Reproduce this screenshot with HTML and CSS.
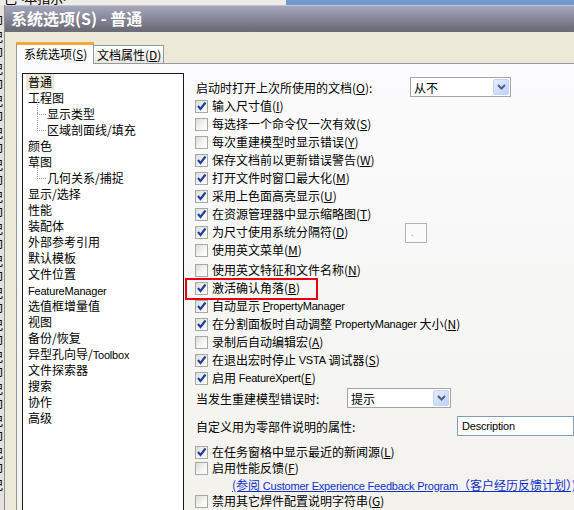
FILE: index.html
```html
<!DOCTYPE html>
<html lang="zh-CN">
<head>
    <meta charset="UTF-8">
    <title>系统选项 - 普通</title>
    <link rel="stylesheet" href="styles.css">
</head>
<body>
    <div class="desk">
        <div class="desk-top">
            <span class="desk-top-text">己&lt;本指示&gt;</span>
            <div class="desk-top-blue"></div>
        </div>
        <div class="desk-side">
            <span>印<br>记<br>印<br>记<br>印<br>记<br>印<br>记<br>印<br>记<br>印<br>记<br>印<br>记<br>印<br>记<br>印<br>记<br>印<br>记<br>印<br>记<br>印<br>记<br>印<br>记<br>印<br>记<br>印<br>记</span>
        </div>

        <div class="dialog">
            <div class="titlebar">系统选项(S) - 普通</div>

            <div class="dialog-body">
                <div class="tabs">
                    <div class="tab tab-active">系统选项(<u>S</u>)</div>
                    <div class="tab">文档属性(<u>D</u>)</div>
                </div>

                <div class="tab-page">
                    <!-- category tree -->
                    <ul class="tree">
                        <li><span class="selected">普通</span></li>
                        <li><span>工程图</span></li>
                        <li class="sub"><span>显示类型</span></li>
                        <li class="sub"><span>区域剖面线/填充</span></li>
                        <li><span>颜色</span></li>
                        <li><span>草图</span></li>
                        <li class="sub"><span>几何关系/捕捉</span></li>
                        <li><span>显示/选择</span></li>
                        <li><span>性能</span></li>
                        <li><span>装配体</span></li>
                        <li><span>外部参考引用</span></li>
                        <li><span>默认模板</span></li>
                        <li><span>文件位置</span></li>
                        <li><span class="en">FeatureManager</span></li>
                        <li><span>选值框增量值</span></li>
                        <li><span>视图</span></li>
                        <li><span>备份/恢复</span></li>
                        <li><span>异型孔向导/<span class="en">Toolbox</span></span></li>
                        <li><span>文件探索器</span></li>
                        <li><span>搜索</span></li>
                        <li><span>协作</span></li>
                        <li><span>高级</span></li>
                    </ul>

                    <!-- general options -->
                    <div class="options">
                        <div class="field-row">
                            <span class="field-label label-open">启动时打开上次所使用的文档(<u>O</u>):</span>
                            <div class="select select-open"><span>从不</span><span class="select-btn"><svg width="9" height="6" viewBox="0 0 9 6"><path d="M1 1 L4.5 4.5 L8 1" fill="none" stroke="#4d6185" stroke-width="2"/></svg></span></div>
                        </div>

                        <div class="check-row"><span class="box checked"><svg width="11" height="11" viewBox="0 0 11 11"><path d="M2 5 L4.5 8 L9.5 1.5" fill="none" stroke="#22409c" stroke-width="2.2"/></svg></span>输入尺寸值(<u>I</u>)</div>
                        <div class="check-row"><span class="box"></span>每选择一个命令仅一次有效(<u>S</u>)</div>
                        <div class="check-row"><span class="box"></span>每次重建模型时显示错误(<u>Y</u>)</div>
                        <div class="check-row"><span class="box checked"><svg width="11" height="11" viewBox="0 0 11 11"><path d="M2 5 L4.5 8 L9.5 1.5" fill="none" stroke="#22409c" stroke-width="2.2"/></svg></span>保存文档前以更新错误警告(<u>W</u>)</div>
                        <div class="check-row"><span class="box checked"><svg width="11" height="11" viewBox="0 0 11 11"><path d="M2 5 L4.5 8 L9.5 1.5" fill="none" stroke="#22409c" stroke-width="2.2"/></svg></span>打开文件时窗口最大化(<u>M</u>)</div>
                        <div class="check-row"><span class="box checked"><svg width="11" height="11" viewBox="0 0 11 11"><path d="M2 5 L4.5 8 L9.5 1.5" fill="none" stroke="#22409c" stroke-width="2.2"/></svg></span>采用上色面高亮显示(<u>U</u>)</div>
                        <div class="check-row"><span class="box checked"><svg width="11" height="11" viewBox="0 0 11 11"><path d="M2 5 L4.5 8 L9.5 1.5" fill="none" stroke="#22409c" stroke-width="2.2"/></svg></span>在资源管理器中显示缩略图(<u>T</u>)</div>
                        <div class="check-row">
                            <span class="check-wide"><span class="box checked"><svg width="11" height="11" viewBox="0 0 11 11"><path d="M2 5 L4.5 8 L9.5 1.5" fill="none" stroke="#22409c" stroke-width="2.2"/></svg></span>为尺寸使用系统分隔符(<u>D</u>)</span>
                            <span class="mini-field">.</span>
                        </div>
                        <div class="check-row"><span class="box"></span>使用英文菜单(<u>M</u>)</div>
                        <div class="check-row spaced"><span class="box"></span>使用英文特征和文件名称(<u>N</u>)</div>
                        <div class="check-row marked"><span class="box checked"><svg width="11" height="11" viewBox="0 0 11 11"><path d="M2 5 L4.5 8 L9.5 1.5" fill="none" stroke="#22409c" stroke-width="2.2"/></svg></span>激活确认角落(<u>B</u>)</div>
                        <div class="check-row"><span class="box checked"><svg width="11" height="11" viewBox="0 0 11 11"><path d="M2 5 L4.5 8 L9.5 1.5" fill="none" stroke="#22409c" stroke-width="2.2"/></svg></span>自动显示&nbsp;<span class="en"><u>P</u>ropertyManager</span></div>
                        <div class="check-row"><span class="box checked"><svg width="11" height="11" viewBox="0 0 11 11"><path d="M2 5 L4.5 8 L9.5 1.5" fill="none" stroke="#22409c" stroke-width="2.2"/></svg></span>在分割面板时自动调整&nbsp;<span class="en">PropertyManager</span>&nbsp;大小(<u>N</u>)</div>
                        <div class="check-row"><span class="box"></span>录制后自动编辑宏(<u>A</u>)</div>
                        <div class="check-row"><span class="box checked"><svg width="11" height="11" viewBox="0 0 11 11"><path d="M2 5 L4.5 8 L9.5 1.5" fill="none" stroke="#22409c" stroke-width="2.2"/></svg></span>在退出宏时停止&nbsp;<span class="en">VSTA</span>&nbsp;调试器(<u>S</u>)</div>
                        <div class="check-row"><span class="box checked"><svg width="11" height="11" viewBox="0 0 11 11"><path d="M2 5 L4.5 8 L9.5 1.5" fill="none" stroke="#22409c" stroke-width="2.2"/></svg></span>启用&nbsp;<span class="en">FeatureXpert</span>(<u>E</u>)</div>

                        <div class="field-row rebuild-row">
                            <span class="field-label label-rebuild">当发生重建模型错误时:</span>
                            <div class="select select-rebuild"><span>提示</span><span class="select-btn"><svg width="9" height="6" viewBox="0 0 9 6"><path d="M1 1 L4.5 4.5 L8 1" fill="none" stroke="#4d6185" stroke-width="2"/></svg></span></div>
                        </div>

                        <div class="field-row property-row">
                            <span class="field-label label-property">自定义用为零部件说明的属性:</span>
                            <div class="text-input en">Description</div>
                        </div>

                        <div class="check-row tight news-row"><span class="box checked"><svg width="11" height="11" viewBox="0 0 11 11"><path d="M2 5 L4.5 8 L9.5 1.5" fill="none" stroke="#22409c" stroke-width="2.2"/></svg></span>在任务窗格中显示最近的新闻源(<u>L</u>)</div>
                        <div class="check-row tight"><span class="box"></span>启用性能反馈(<u>F</u>)</div>
                        <div class="link-row"><a class="link" href="#">(参阅 <span class="en">Customer Experience Feedback Program</span>（客户经历反馈计划）)</a></div>
                        <div class="check-row last"><span class="box"></span>禁用其它焊件配置说明字符串(<u>G</u>)</div>
                    </div>
                </div>
            </div>
        </div>
    </div>
</body>
</html>
```

FILE: styles.css
```css
* {
    margin: 0;
    padding: 0;
    box-sizing: border-box;
}

body {
    font-family: "Noto Sans CJK SC", sans-serif;
    font-size: 12px;
    color: #000;
    background: #d6d3ce;
}

u {
    text-decoration: underline;
    text-underline-offset: 1px;
}

/* latin runs use an Arial-width face, closer to the dialog font */
.en {
    font-family: "Liberation Sans", Arial, sans-serif;
    font-size: 11px;
    letter-spacing: -0.2px;
}

.desk {
    width: 574px;
    height: 510px;
    overflow: hidden;
    display: grid;
    grid-template-columns: 5px 569px;
    grid-template-rows: 5px 505px;
}

/* window behind the dialog */
.desk-top {
    grid-column: 1 / -1;
    display: flex;
    background: #eeede8;
    overflow: hidden;
}

.desk-top-text {
    width: 286px;
    line-height: 12px;
    margin-top: -8px;
    padding-left: 4px;
    font-size: 13px;
}

.desk-top-blue {
    flex: 1;
    background: #7199d0;
}

.desk-side {
    background: #e4e2dc;
    overflow: hidden;
    border-right: 1px solid #8d8d96;
}

.desk-side span {
    display: block;
    margin-left: -9px;
    padding-top: 8px;
    font-size: 12px;
    line-height: 16px;
}

/* dialog */
.dialog {
    display: flex;
    flex-direction: column;
    min-width: 0;
}

.titlebar {
    height: 27px;
    padding-left: 6px;
    color: #fff;
    font-size: 16px;
    font-weight: bold;
    line-height: 25px;
    border-top: 1px solid #c4c5d0;
    background: linear-gradient(#a5a7bb, #8f90a4 35%, #6e6f7b 85%, #6a6b77);
}

.dialog-body {
    flex: 1;
    display: flex;
    flex-direction: column;
    background: #ece9d8;
    padding: 10px 0 0 11px;
    min-height: 0;
}

.tabs {
    display: flex;
    align-items: flex-end;
    height: 21px;
    position: relative;
    z-index: 1;
}

.tab {
    height: 18px;
    width: 70px;
    padding-left: 3px;
    line-height: 17px;
    white-space: nowrap;
    border: 1px solid #919b9c;
    border-left: none;
    border-bottom: none;
    background: linear-gradient(#ffffff, #f3f2ed 60%, #e5e4dd);
}

.tab-active {
    height: 22px;
    width: 78px;
    margin-bottom: -1px;
    padding-left: 7px;
    line-height: 18px;
    border-left: 1px solid #919b9c;
    border-top: 3px solid #f4a93b;
    background: #fcfcfe;
}

.tab-page {
    flex: 1;
    display: flex;
    min-height: 0;
    padding: 9px 0 0 5px;
    border-top: 1px solid #919b9c;
    border-left: 1px solid #919b9c;
    background: linear-gradient(#fcfcfe, #f7f7f6 50%, #f3f2ed);
    white-space: nowrap;
}

/* tree */
.tree {
    list-style: none;
    width: 162px;
    flex-shrink: 0;
    margin-bottom: -4px;
    background: #fff;
    border: 1px solid #1a1a1a;
}

.tree li {
    position: relative;
    height: 16px;
    line-height: 16px;
    padding-left: 3px;
}

.tree li > span {
    padding: 0 2px;
}

.tree li .selected {
    display: inline-block;
    height: 16px;
    background: #ece9d8;
}

.tree li.sub {
    padding-left: 22px;
}

/* dotted branch lines for child items */
.tree li.sub::before {
    content: "";
    position: absolute;
    left: 14px;
    top: -7px;
    width: 8px;
    height: 15px;
    border-left: 1px dotted #9a9a9a;
    border-bottom: 1px dotted #9a9a9a;
}

.tree li.sub + li.sub::before {
    top: -9px;
    height: 17px;
}

/* options panel */
.options {
    flex: 1;
    min-width: 0;
    padding: 4px 0 0 11px;
    display: flex;
    flex-direction: column;
}

.field-row {
    display: flex;
    align-items: center;
    height: 20px;
}

.field-label {
    flex-shrink: 0;
    padding-left: 1px;
}

.label-open {
    width: 215px;
}

.label-rebuild {
    width: 152px;
}

.label-property {
    width: 262px;
}

.select {
    display: flex;
    align-items: center;
    justify-content: space-between;
    height: 20px;
    padding: 0 1px 0 3px;
    background: #fff;
    border: 1px solid #a5a5a5;
}

.select-open {
    width: 101px;
}

.select-rebuild {
    width: 104px;
}

.select-btn {
    display: flex;
    align-items: center;
    justify-content: center;
    width: 16px;
    height: 16px;
    border: 1px solid #c3d3fd;
    border-radius: 2px;
    background: linear-gradient(135deg, #e6eefe, #bfd1fa);
}

.text-input {
    flex: 1;
    height: 20px;
    padding-left: 4px;
    line-height: 18px;
    background: #fff;
    border: 1px solid #7f9db9;
}

.check-row {
    display: flex;
    align-items: center;
    height: 18px;
    line-height: 18px;
}

.check-row.spaced {
    margin-top: 2px;
}

.check-row.tight {
    height: 16px;
    line-height: 16px;
}

.check-row.last {
    height: 16px;
}

.check-wide {
    display: flex;
    align-items: center;
    width: 210px;
    flex-shrink: 0;
}

.box {
    display: flex;
    align-items: center;
    justify-content: center;
    width: 13px;
    height: 13px;
    margin-right: 4px;
    flex-shrink: 0;
    border: 1px solid #a8a8a8;
    background: linear-gradient(135deg, #dcdcd5, #f6f6f3 60%, #ffffff);
}

.mini-field {
    width: 22px;
    height: 20px;
    margin-top: 2px;
    padding-left: 5px;
    line-height: 18px;
    font-size: 9px;
    color: #999;
    background: #fbfbfb;
    border: 1px solid #b3b3b3;
}

/* red annotation frame */
.marked {
    position: relative;
}

.marked::after {
    content: "";
    position: absolute;
    left: -10px;
    top: -1px;
    width: 129px;
    height: 18px;
    border: 2px solid #e8000c;
}

.rebuild-row {
    height: 22px;
}

.property-row {
    margin-top: 7px;
}

.news-row {
    margin-top: 8px;
}

.link-row {
    height: 17px;
    line-height: 17px;
    padding-left: 37px;
}

.link {
    color: #1030c8;
    text-decoration: underline;
}
```
